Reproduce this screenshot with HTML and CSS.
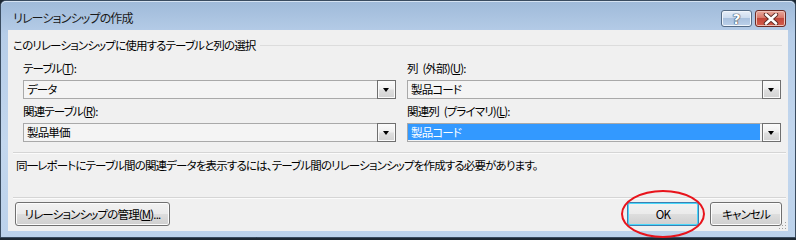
FILE: index.html
```html
<!DOCTYPE html>
<html lang="ja">
<head>
  <meta charset="UTF-8">
  <title>リレーションシップの作成</title>
  <link rel="stylesheet" href="styles.css">
</head>
<body>
  <div class="window">
    <div class="titlebar">
      <span class="title">リレーションシップの作成</span>
      <div class="caption-buttons">
        <div class="cap help">?</div>
        <div class="cap close">
          <svg width="16" height="12" viewBox="0 0 16 12">
            <path d="M3 1.5 L13 10.5 M13 1.5 L3 10.5" stroke="#5a2a24" stroke-width="4.4" stroke-linecap="round"/>
            <path d="M3 1.5 L13 10.5 M13 1.5 L3 10.5" stroke="#ffffff" stroke-width="2.6" stroke-linecap="round"/>
          </svg>
        </div>
      </div>
    </div>

    <div class="client">
      <div class="group-head">
        <span>このリレーションシップに使用するテーブルと列の選択</span>
        <div class="rule"></div>
      </div>

      <div class="fields">
        <div class="field">
          <label>テーブル(<u>T</u>):</label>
          <div class="combo">
            <span class="value">データ</span>
            <span class="arrow"></span>
          </div>
        </div>
        <div class="field">
          <label>列 (外部)(<u>U</u>):</label>
          <div class="combo">
            <span class="value">製品コード</span>
            <span class="arrow"></span>
          </div>
        </div>
        <div class="field">
          <label>関連テーブル(<u>R</u>):</label>
          <div class="combo">
            <span class="value">製品単価</span>
            <span class="arrow"></span>
          </div>
        </div>
        <div class="field">
          <label>関連列 (プライマリ)(<u>L</u>):</label>
          <div class="combo">
            <span class="value selected">製品コード</span>
            <span class="arrow"></span>
          </div>
        </div>
      </div>

      <div class="sep"></div>
      <p class="message">同一レポートにテーブル間の関連データを表示するには、テーブル間のリレーションシップを作成する必要があります。</p>
      <div class="sep"></div>

      <div class="footer">
        <button class="btn manage">リレーションシップの管理(<u>M</u>)...</button>
        <div class="spacer"></div>
        <div class="ok-wrap">
          <button class="btn default">OK</button>
          <div class="circle"></div>
        </div>
        <button class="btn">キャンセル</button>
      </div>

      <div class="grip"></div>
    </div>
  </div>
</body>
</html>
```

FILE: styles.css
```css
* {
  box-sizing: border-box;
  margin: 0;
  padding: 0;
}

body {
  background-color: #1d2833;
  width: 796px;
  height: 240px;
  overflow: hidden;
  font-family: 'Noto Sans CJK JP', 'Noto Sans', sans-serif;
  font-size: 11.5px;
  letter-spacing: -0.85px;
  font-feature-settings: 'palt';
  color: #000;
}

.window {
  width: 796px;
  height: 238px;
  border: 1px solid #3a4c60;
  border-radius: 6px 6px 0 0;
  background: linear-gradient(#9fbad9, #b6cde8 14%, #c3d7ee 60%, #bcd2eb);
  display: flex;
  flex-direction: column;
}

.titlebar {
  height: 29px;
  display: flex;
  align-items: flex-start;
  padding: 0 9px 0 12px;
  box-shadow: inset 0 1px 0 #d5e3f2;
  border-radius: 5px 5px 0 0;
}

.title {
  font-size: 12px;
  line-height: 16px;
  margin-top: 9px;
  flex: 1;
  color: #1a1a1a;
}

.caption-buttons {
  display: flex;
  gap: 3px;
  margin-top: 9px;
}

.cap {
  width: 31px;
  height: 17px;
  border: 1px solid #546b86;
  border-radius: 3px;
  display: flex;
  align-items: center;
  justify-content: center;
}

.help {
  background: linear-gradient(#e6eef8, #cddcef 45%, #a9c1de 50%, #bcd1ea);
  box-shadow: inset 0 0 0 1px #f0f5fb;
  color: #fff;
  font-family: 'DejaVu Sans', sans-serif;
  font-weight: bold;
  font-size: 14px;
  letter-spacing: 0;
  text-shadow: 0 0 1px #2d3f55, 0 0 1px #2d3f55, 0 0 1px #2d3f55;
}

.close {
  border-color: #6b2b25;
  background: linear-gradient(#e9a99d, #d8786a 45%, #c2473a 50%, #d45d4c);
  box-shadow: inset 0 0 0 1px #eec0b7;
}

.client {
  position: relative;
  margin: 0 7px;
  height: 201px;
  background-color: #f0f0f0;
  padding: 8px 6px 0 5px;
}

.group-head {
  display: flex;
  align-items: center;
  height: 14px;
  line-height: 14px;
}

.group-head .rule {
  flex: 1;
  height: 1px;
  margin-left: 4px;
  background-color: #dcdcdc;
}

.fields {
  display: grid;
  grid-template-columns: 373px 374px;
  column-gap: 11px;
  row-gap: 5px;
  padding-left: 10px;
  margin-top: 9px;
}

.field label {
  display: block;
  line-height: 15px;
  margin-bottom: 4px;
  word-spacing: 3px;
}

.combo {
  height: 19px;
  border: 1px solid #a9a9a9;
  background-color: #f4f4f4;
  display: flex;
}

.combo .value {
  flex: 1;
  line-height: 17px;
  padding-left: 3px;
}

.combo .value.selected {
  background-color: #3399ff;
  color: #fff;
  margin: 0 2px 1px 0;
}

.combo .arrow {
  width: 19px;
  margin: -1px -1px -1px 0;
  border: 1px solid #6f6f6f;
  background: linear-gradient(#fbfbfb, #f0f0f0 45%, #dedede 55%, #d2d2d2);
  box-shadow: inset 0 0 0 1px #fafafa;
  position: relative;
}

.combo .arrow::after {
  content: '';
  position: absolute;
  left: 5px;
  top: 7px;
  border-left: 3.5px solid transparent;
  border-right: 3.5px solid transparent;
  border-top: 4px solid #000;
}

.sep {
  height: 2px;
  border-top: 1px solid #d5d5d5;
  border-bottom: 1px solid #fbfbfb;
  margin-right: -4px;
}

.fields + .sep {
  margin-top: 10px;
}

.message {
  line-height: 14px;
  padding-left: 3px;
  margin: 4px 0 25px;
}

.footer {
  display: flex;
  align-items: flex-start;
  margin-top: 3px;
  padding-left: 2px;
}

.spacer {
  flex: 1;
}

.btn {
  font: inherit;
  letter-spacing: inherit;
  color: #000;
  height: 24px;
  border: 1px solid #707070;
  border-radius: 3px;
  background: linear-gradient(#f2f2f2, #ebebeb 48%, #dddddd 52%, #cfcfcf);
  box-shadow: inset 0 0 0 1px #fcfcfc;
  padding: 0 4px;
  line-height: 20px;
  white-space: nowrap;
}

.manage {
  width: 155px;
}

.ok-wrap {
  position: relative;
  margin-right: 11px;
}

.ok-wrap .btn,
.footer > .btn:last-child {
  width: 72px;
}

.btn.default {
  border-color: #3c7fb1;
  box-shadow: inset 0 0 0 1px #48d8fb;
}

.circle {
  position: absolute;
  left: -6px;
  top: -12px;
  width: 84px;
  height: 48px;
  border: 2px solid #e8141c;
  border-radius: 50%;
}

.grip {
  position: absolute;
  right: 2px;
  bottom: 2px;
  width: 8px;
  height: 8px;
  background-image: radial-gradient(circle, #a0a0a0 0.8px, transparent 1px);
  background-size: 3px 3px;
  clip-path: polygon(100% 0, 100% 100%, 0 100%);
}
```
